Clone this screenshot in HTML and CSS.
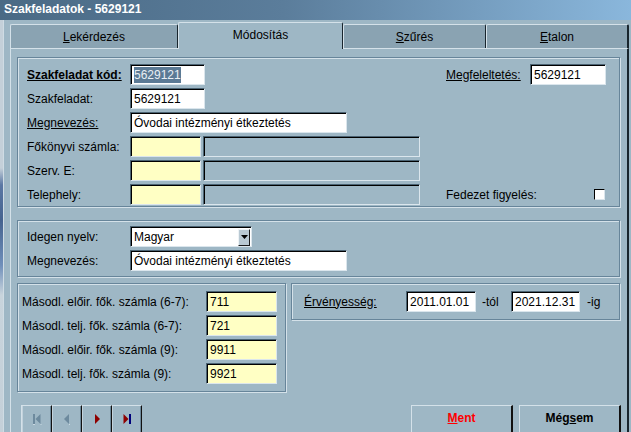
FILE: index.html
```html
<!DOCTYPE html>
<html lang="hu">
<head>
<meta charset="utf-8">
<title>Szakfeladatok - 5629121</title>
<link rel="stylesheet" href="styles.css">
</head>
<body>
<div class="screen">
  <div class="titlebar">Szakfeladatok - 5629121</div>
  <div class="main">
    <div class="desk"></div>
    <div class="frame">
      <div class="tabs">
        <div class="tab t1"><u>L</u>ekérdezés</div>
        <div class="tab t2 active">Módosítás</div>
        <div class="tab t3"><u>S</u>zűrés</div>
        <div class="tab t4"><u>E</u>talon</div>
      </div>
      <div class="panel">
        <div class="group g1">
          <div class="row">
            <span class="lbl"><b><u>Szakfeladat kód:</u></b></span>
            <span class="inp w75"><span class="sel">5629121</span></span>
            <div class="right">
              <span><u>Megfeleltetés:</u></span>
              <span class="inp w76">5629121</span>
            </div>
          </div>
          <div class="row">
            <span class="lbl">Szakfeladat:</span>
            <span class="inp w75">5629121</span>
          </div>
          <div class="row">
            <span class="lbl"><u>Megnevezés:</u></span>
            <span class="inp w217">Óvodai intézményi étkeztetés</span>
          </div>
          <div class="row">
            <span class="lbl">Főkönyvi számla:</span>
            <span class="inp yellow w71"></span>
            <span class="inp grey w217"></span>
          </div>
          <div class="row">
            <span class="lbl">Szerv. E:</span>
            <span class="inp yellow w71"></span>
            <span class="inp grey w217"></span>
          </div>
          <div class="row">
            <span class="lbl">Telephely:</span>
            <span class="inp yellow w71"></span>
            <span class="inp grey w217"></span>
            <div class="right">
              <span>Fedezet figyelés:</span>
              <span class="check"></span>
            </div>
          </div>
        </div>

        <div class="group g2">
          <div class="row">
            <span class="lbl">Idegen nyelv:</span>
            <span class="inp combo">Magyar<span class="dd"><svg width="7" height="4" viewBox="0 0 7 4"><path d="M0 0H7L3.5 4Z" fill="#000"/></svg></span></span>
          </div>
          <div class="row">
            <span class="lbl">Megnevezés:</span>
            <span class="inp w217">Óvodai intézményi étkeztetés</span>
          </div>
        </div>

        <div class="lower">
          <div class="group g3">
            <div class="row">
              <span class="lbl3">Másodl. előir. fők. számla (6-7):</span>
              <span class="inp yellow w71">711</span>
            </div>
            <div class="row">
              <span class="lbl3">Másodl. telj. fők. számla (6-7):</span>
              <span class="inp yellow w71">721</span>
            </div>
            <div class="row">
              <span class="lbl3">Másodl. előir. fők. számla (9):</span>
              <span class="inp yellow w71">9911</span>
            </div>
            <div class="row">
              <span class="lbl3">Másodl. telj. fők. számla (9):</span>
              <span class="inp yellow w71">9921</span>
            </div>
          </div>
          <div class="group g4">
            <div class="row">
              <span class="lbl4"><u>Érvényesség:</u></span>
              <span class="inp w70">2011.01.01</span>
              <span class="suffix">-tól</span>
              <span class="inp w69">2021.12.31</span>
              <span class="suffix2">-ig</span>
            </div>
          </div>
        </div>

        <div class="bottom">
          <div class="nav">
            <div class="nbtn"><svg width="10" height="11" viewBox="0 0 10 11"><rect x="1" y="0" width="2" height="10" fill="#6d8a9e"/><path d="M8.5 0V10L3.5 5Z" fill="#6d8a9e"/><path d="M1 10.5H3M8.5 10.5H9.5" stroke="#c9d8e1" stroke-width="1"/></svg></div>
            <div class="nbtn"><svg width="10" height="11" viewBox="0 0 10 11"><path d="M7 0V10L2 5Z" fill="#6d8a9e"/><path d="M7 10.5H8" stroke="#c9d8e1" stroke-width="1"/></svg></div>
            <div class="nbtn"><svg width="10" height="11" viewBox="0 0 10 11"><path d="M3 0V10L8 5Z" fill="#8e0000"/></svg></div>
            <div class="nbtn"><svg width="10" height="11" viewBox="0 0 10 11"><path d="M1.5 0V10L6.5 5Z" fill="#8e0000"/><rect x="7" y="0" width="2" height="10" fill="#00007a"/></svg></div>
          </div>
          <div class="btn save"><u>M</u>ent</div>
          <div class="btn cancel">Még<u>s</u>em</div>
        </div>
      </div>
    </div>
  </div>
</div>
</body>
</html>
```

FILE: styles.css
```css
* { box-sizing: border-box; }
html, body { margin: 0; padding: 0; }
body {
  width: 631px;
  height: 432px;
  overflow: hidden;
  font-family: "Liberation Sans", Arial, sans-serif;
  font-size: 12px;
  color: #000;
  background: #9eb7c5;
}
u { text-decoration: underline; }

.screen {
  width: 631px;
  height: 432px;
  display: flex;
  flex-direction: column;
  overflow: hidden;
}
.titlebar {
  flex: none;
  height: 20px;
  padding-left: 4px;
  line-height: 19px;
  color: #fff;
  font-weight: bold;
  font-size: 12px;
  background: linear-gradient(to right, #4a6a85 0%, #5b7d9b 45%, #8ab7dc 100%);
}
.main { flex: 1; display: flex; min-height: 0; }
.desk {
  flex: none;
  width: 3px;
  background: linear-gradient(to bottom, #c4d0d9 0, #c4d0d9 148px, #5b78a4 165px, #45638f 200px, #6f8fba 245px, #c8d4dc 275px, #c4d0d9 100%);
}
.frame {
  flex: 1;
  display: flex;
  flex-direction: column;
  padding: 2px 2px 0 7px;
  background: #9eb7c5;
  border-left: 1px solid #cfdce4;
}

/* tabs */
.tabs { flex: none; display: flex; align-items: flex-end; height: 26px; margin-left: -1px; }
.tab {
  height: 24px;
  display: flex;
  align-items: center;
  justify-content: center;
  background: #8aa3b2;
  border-top: 1px solid #d4e1e9;
  border-left: 1px solid #d4e1e9;
  border-right: 1px solid #18252d;
  border-radius: 2px 2px 0 0;
  padding-top: 1px;
}
.t1 { width: 168px; }
.t2 { width: 165px; }
.t3 { width: 143px; }
.t4 { width: 143px; border-right-width: 2px; }
.tab.active {
  height: 27px;
  margin-bottom: -1px;
  background: #9eb7c5;
  position: relative;
  z-index: 1;
  padding-bottom: 3px;
}

/* panel */
.panel {
  flex: 1;
  display: flex;
  flex-direction: column;
  background: #9eb7c5;
  border-top: 1px solid #d4e1e9;
  border-left: 1px solid #d4e1e9;
  border-right: 2px solid #18252d;
  padding: 8px 7px 0 6px;
  margin-left: -1px;
}
.group {
  border: 1px solid #67859a;
  box-shadow: inset 1px 1px 0 #d4e1e9, 1px 1px 0 #d4e1e9;
  display: flex;
  flex-direction: column;
  gap: 3px;
}
.row { display: flex; align-items: center; height: 21px; white-space: nowrap; }

.g1 { padding: 6px 13px 1px 9px; }
.g2 { padding: 5px 13px 5px 9px; margin-top: 13px; }
.lbl { flex: none; width: 103px; }
.right {
  margin-left: auto;
  width: 160px;
  display: flex;
  align-items: center;
  justify-content: space-between;
}

.inp {
  flex: none;
  display: flex;
  align-items: center;
  height: 21px;
  background: #fff;
  border-top: 1px solid #4b6373;
  border-left: 1px solid #4b6373;
  border-right: 1px solid #dbe6ed;
  border-bottom: 1px solid #dbe6ed;
  box-shadow: inset 1px 1px 0 #000;
  padding-left: 3px;
  padding-top: 1px;
  overflow: hidden;
  white-space: nowrap;
}
.yellow { background: #ffffc4; }
.grey { background: transparent; margin-left: 2px; }
.w75 { width: 75px; }
.w76 { width: 76px; }
.w71 { width: 71px; }
.w70 { width: 70px; }
.w69 { width: 69px; }
.w217 { width: 217px; }
.sel { background: #5b7a95; color: #e8eff4; padding: 1px 0; }

.check {
  width: 11px;
  height: 11px;
  margin-right: 1px;
  background: #fff;
  border-top: 1px solid #000;
  border-left: 1px solid #000;
  border-right: 1px solid #dbe6ed;
  border-bottom: 1px solid #dbe6ed;
}

.combo { width: 122px; padding-right: 1px; }
.dd {
  margin-left: auto;
  width: 12px;
  height: 17px;
  display: flex;
  align-items: center;
  justify-content: center;
  background: #b9c9d3;
  border: 1px solid;
  border-color: #eef3f6 #1a1a1a #1a1a1a #eef3f6;
}

.lower { display: flex; align-items: flex-start; gap: 5px; margin-top: 6px; }
.g3 { width: 269px; padding: 7px 8px 7px 4px; }
.lbl3 { flex: none; width: 184px; }
.g4 { flex: 1; padding: 7px 0 7px 12px; }
.lbl4 { flex: none; width: 102px; }
.suffix { flex: none; width: 35px; padding-left: 6px; }
.suffix2 { padding-left: 7px; }

.bottom { display: flex; align-items: flex-start; margin-top: 13px; margin-right: -1px; }
.nav { display: flex; margin-left: 4px; border-left: 1px solid #d4e1e9; }
.nbtn {
  width: 30px;
  height: 28px;
  display: flex;
  justify-content: center;
  padding-top: 8px;
  border-top: 1px solid #d4e1e9;
  border-right: 1px solid #111;
  box-shadow: inset -1px 0 0 #6d889a, inset 1px 0 0 #c2d2dc;
}
.btn {
  width: 102px;
  height: 28px;
  text-align: center;
  font-weight: bold;
  font-size: 12px;
  line-height: 14px;
  padding-top: 5px;
  border-top: 1px solid #d4e1e9;
  border-left: 1px solid #d4e1e9;
  border-right: 2px solid #111;
}
.save { margin-left: auto; color: #ff0000; }
.cancel { margin-left: 6px; color: #000; }
```
